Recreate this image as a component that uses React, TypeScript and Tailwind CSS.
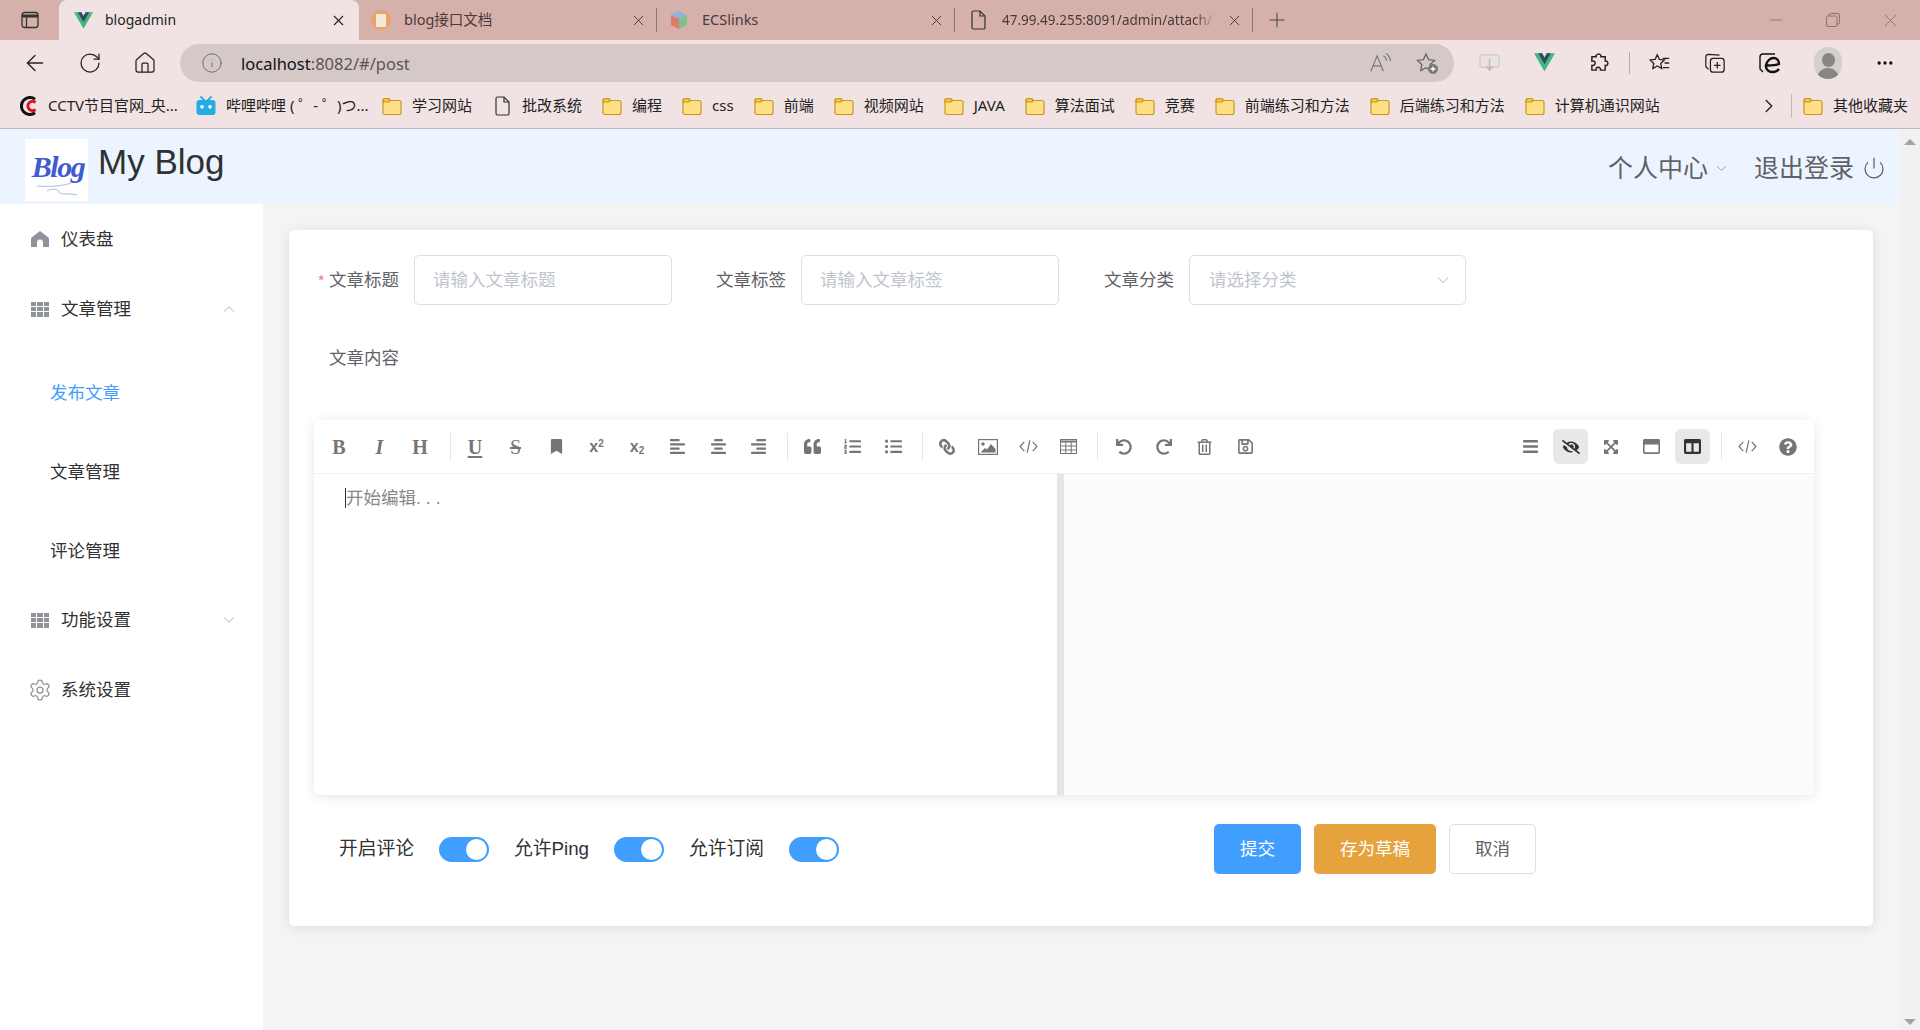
import type { ReactNode } from "react";
import {
  ArrowLeft,
  ChevronDown,
  ChevronRight,
  ChevronUp,
  Home,
  Info,
  Minus,
  MoreHorizontal,
  Plus,
  Power,
  RotateCw,
  Settings,
  X,
} from "lucide-react";
import {
  FaAlignCenter,
  FaAlignLeft,
  FaAlignRight,
  FaBars,
  FaBookmark,
  FaColumns,
  FaExpandArrowsAlt,
  FaEyeSlash,
  FaLink,
  FaListOl,
  FaListUl,
  FaQuestionCircle,
  FaQuoteLeft,
  FaRedo,
  FaRegSave,
  FaRegTrashAlt,
  FaRegWindowMaximize,
  FaUndo,
} from "react-icons/fa";

const pageFont = "[font-family:'Liberation_Sans','Noto_Sans_CJK_SC',sans-serif]";
const chromeFont = "[font-family:'Noto_Sans','Noto_Sans_CJK_SC',sans-serif]";

function VueLogo({ className }: { className: string }) {
  return (
    <svg viewBox="0 0 24 21" className={className}>
      <path fill="#41b883" d="M14.8 0 12 4.8 9.2 0H0l12 20.8L24 0z" />
      <path fill="#35495e" d="M14.8 0 12 4.8 9.2 0H4.8L12 12.5 19.2 0z" />
    </svg>
  );
}

function FileIcon({ className }: { className: string }) {
  return (
    <svg viewBox="0 0 15 20" fill="none" stroke="#333" strokeWidth="1.2" className={className}>
      <path d="M1 2.5A1.5 1.5 0 0 1 2.5 1H9l5 5v11.5a1.5 1.5 0 0 1-1.5 1.5h-10A1.5 1.5 0 0 1 1 17.5z" />
      <path d="M9 1v5h5" />
    </svg>
  );
}

function Folder() {
  return (
    <svg viewBox="0 0 20 20" className="w-5 h-5 shrink-0">
      <path
        d="M1 4.5A2 2 0 0 1 3 2.5h3.5l2 2H17a2 2 0 0 1 2 2v10a2 2 0 0 1-2 2H3a2 2 0 0 1-2-2z"
        fill="#ffdf85"
        stroke="#c8981e"
        strokeWidth="1.2"
      />
      <path d="M1 6V4.5a2 2 0 0 1 2-2h3.5l2 2-1.5 1.5z" fill="#f4c542" stroke="#c8981e" strokeWidth="1.2" />
    </svg>
  );
}

function CctvIcon() {
  return (
    <svg viewBox="0 0 18 20" className="w-[18px] h-5 shrink-0">
      <path d="M15 3.2A8.5 8.5 0 1 0 15 16.8" fill="none" stroke="#111" strokeWidth="3" />
      <path d="M15.5 6.5A4.6 4.6 0 1 0 15.5 13.5" fill="none" stroke="#d8141c" strokeWidth="3" />
    </svg>
  );
}

function BiliIcon() {
  return (
    <svg viewBox="0 0 20 20" className="w-5 h-5 shrink-0">
      <path d="M5 1l3 3M15 1l-3 3" stroke="#23ade5" strokeWidth="1.8" strokeLinecap="round" />
      <rect x="0.5" y="4" width="19" height="15" rx="3" fill="#23ade5" />
      <rect x="4.5" y="9" width="3" height="3.4" rx="1.2" fill="#fff" />
      <rect x="12.5" y="9" width="3" height="3.4" rx="1.2" fill="#fff" />
    </svg>
  );
}

function CubeIcon() {
  return (
    <svg viewBox="0 0 20 20" className="w-5 h-5 shrink-0">
      <path d="M10 1l8 4-8 4-8-4z" fill="#8fb4dc" />
      <path d="M2 5l8 4v10l-8-4z" fill="#e07a6e" />
      <path d="M18 5l-8 4v10l8-4z" fill="#7cc08a" />
    </svg>
  );
}

function DocBadge() {
  return (
    <span className="w-5 h-5 rounded-full bg-[#e8a468] flex items-center justify-center shrink-0">
      <span className="w-[10px] h-[13px] bg-[#f2ead8] rounded-[1px]" />
    </span>
  );
}

function BrowserTab({ icon, title, fade }: { icon: ReactNode; title: string; fade?: boolean }) {
  return (
    <div className="w-[298px] h-full flex items-center pl-3 shrink-0 relative">
      {icon}
      <span
        className={`ml-[13px] flex-1 min-w-0 overflow-hidden whitespace-nowrap text-[#4a3a3a] ${
          fade ? "text-[13.5px] pl-[3px] [mask-image:linear-gradient(to_right,black_90%,transparent)]" : "text-[14.5px]"
        }`}
      >
        {title}
      </span>
      <X className="w-[17px] h-[17px] mx-[9px] text-[#333] shrink-0" strokeWidth={1.25} />
      <span className="w-px h-6 bg-[#8c7472] shrink-0" />
    </div>
  );
}

function RestoreIcon() {
  return (
    <svg viewBox="0 0 14 14" className="w-[14px] h-[14px]" fill="none" stroke="currentColor" strokeWidth="1">
      <rect x="0.5" y="3" width="10.500" height="10.500" rx="1.500" />
      <path d="M3 3V2a1.500 1.500 0 0 1 1.500-1.500H12A1.500 1.500 0 0 1 13.500 2v7.500A1.500 1.500 0 0 1 12 11h-1" />
    </svg>
  );
}

function TabBar() {
  return (
    <div className={`h-10 bg-[#d6b1ab] flex items-end ${chromeFont}`}>
      <div className="w-[59px] h-full flex items-center justify-center">
        <svg viewBox="0 0 18 18" className="w-[18px] h-[18px]" fill="none" stroke="#333" strokeWidth="1.3">
          <rect x="1" y="1.5" width="16" height="15" rx="2.5" />
          <path d="M1 5h16" strokeWidth="3" />
          <path d="M5.5 5v11" />
        </svg>
      </div>
      <div className="w-[300px] h-full bg-[#f1e3e3] rounded-t-lg flex items-center pl-[15px] pr-[12px] shrink-0">
        <VueLogo className="w-[19px] h-[17px]" />
        <span className="ml-3 -mt-px flex-1 text-[14px] text-[#222]">blogadmin</span>
        <X className="w-[17px] h-[17px] text-[#222]" strokeWidth={1.5} />
      </div>
      <BrowserTab icon={<DocBadge />} title="blog接口文档" />
      <BrowserTab icon={<CubeIcon />} title="ECSlinks" />
      <BrowserTab icon={<FileIcon className="w-[15px] h-5 shrink-0 ml-[4px]" />} title="47.99.49.255:8091/admin/attach/" fade />
      <div className="h-full flex items-center ml-[12px]">
        <Plus className="w-[24px] h-[24px] text-[#444]" strokeWidth={1} />
      </div>
      <div className="ml-auto h-full flex items-center pr-[19px] text-[#8a7270]">
        <Minus className="w-[20px] h-[20px]" strokeWidth={1} />
        <span className="ml-[40px]"><RestoreIcon /></span>
        <X className="w-[21px] h-[21px] ml-[40px]" strokeWidth={1} />
      </div>
    </div>
  );
}

function NavBar() {
  return (
    <div className={`h-[45px] bg-[#f1e3e3] flex items-center pl-[22px] ${chromeFont}`}>
      <div className="flex items-center gap-[29px] text-[#222]">
        <ArrowLeft className="w-[26px] h-[26px]" strokeWidth={1.25} />
        <RotateCw className="w-[26px] h-[24px]" strokeWidth={1.25} />
        <Home className="w-[26px] h-[24px]" strokeWidth={1.25} />
      </div>
      <div className="ml-[22px] w-[1274px] h-[38px] mt-[1px] rounded-full bg-[#d5c9c8] flex items-center pl-[21px] pr-[15px]">
        <Info className="w-[22px] h-[22px] text-[#666]" strokeWidth={1} />
        <span className="ml-[18px] mt-[2px] text-[16.5px] text-[#111]">
          localhost<span className="text-[#5c5454]">:8082/#/post</span>
        </span>
        <div className="ml-auto flex items-center gap-[23px] text-[#777]">
          <svg viewBox="0 0 24 24" className="w-[23px] h-[23px]" fill="none" stroke="#777" strokeWidth="1.2">
            <path d="M2 20 8.500 4 15 20M4.500 14.500h8M15 4c2 1 3 3 3.500 5M18 1.500c3 2 4 5 4.500 8" />
          </svg>
          <svg viewBox="0 0 24 24" className="w-[24px] h-[24px]" fill="none" stroke="#666" strokeWidth="1.3">
            <path d="M11 3l2.600 5.600 6 .8-4.400 4.200 1 6-5.200-2.900-5.200 2.900 1-6L2.400 9.400l6-.8z" />
            <circle cx="18" cy="18" r="5" fill="#777" stroke="none" />
            <path d="M18 15.500v5M15.500 18h5" stroke="#fff" />
          </svg>
        </div>
      </div>
      <div className="ml-[23px] flex items-center text-[#222]">
        <span className="w-6 flex justify-center">
          <svg viewBox="0 0 22 22" className="w-[21px] h-[21px]">
            <rect x="1" y="3" width="20" height="13" rx="2" fill="#e8e2e2" stroke="#c8c0c0" />
            <path d="M11 7v11M7.500 15l3.500 4 3.500-4" stroke="#bbb" strokeWidth="1.5" fill="none" />
          </svg>
        </span>
        <span className="w-6 flex justify-center ml-[31px]">
          <VueLogo className="w-[21px] h-[19px]" />
        </span>
        <span className="w-6 flex justify-center ml-[31px]">
          <svg viewBox="0 0 22 22" className="w-[21px] h-[21px]" fill="none" stroke="#222" strokeWidth="1.5">
            <path d="M9 2.500c2-1 4 .5 3.500 2.500H17v4.500c2-.5 3.500 1.500 2.500 3.500-.5 1-1.500 1.500-2.500 1V19h-5c.5-2-1-3-2.500-3S7 17 7.500 19H3v-5c2 .5 3.500-1 3.500-2.500S5 9 3 9.500V5h4.500C7 4 7.500 3 9 2.500z" />
          </svg>
        </span>
        <span className="w-px h-[22px] bg-[#b9a9a9] ml-[18px]" />
        <span className="w-6 flex justify-center ml-[18px]">
          <svg viewBox="0 0 24 24" className="w-[22px] h-[22px]" fill="none" stroke="#222" strokeWidth="1.4">
            <path d="M9 3l2.300 5 5.500.7-4 3.800 1 5.500L9 15.300 4.200 18l1-5.500-4-3.800L6.700 8z" />
            <path d="M15 7h7M17 12h5M15 17h7" />
          </svg>
        </span>
        <span className="w-6 flex justify-center ml-[31px]">
          <svg viewBox="0 0 24 24" className="w-[22px] h-[22px]" fill="none" stroke="#222" strokeWidth="1.4">
            <rect x="7" y="7" width="15" height="15" rx="3" />
            <path d="M17 3.500 5 2.500a3 3 0 0 0-3 3V16l3 3M14.500 11v7M11 14.500h7" />
          </svg>
        </span>
        <span className="w-6 flex justify-center ml-[31px]">
          <svg viewBox="0 0 24 24" className="w-[24px] h-[24px]" fill="none" stroke="#111" strokeWidth="1.4">
            <path d="M17 3H5a3 3 0 0 0-3 3v12l3 3" />
            <path d="M8 14.500c3 0 10 0 13-1.500 0-4-2.500-6-5.500-6S9 9.500 8 14.500zm0 0c-.5 4 3 7 7 6.500 2.500 0 4.500-1 6-3" strokeWidth="2.400" />
          </svg>
        </span>
        <span className="w-[28px] h-[32px] rounded-full bg-[#d3cfcc] ml-[32px] flex flex-col items-center justify-end overflow-hidden">
          <span className="w-[13px] h-[14px] rounded-full bg-[#8a8583]" />
          <span className="w-[22px] h-[11px] mt-[1px] rounded-t-full bg-[#8a8583]" />
        </span>
        <MoreHorizontal className="w-[20px] h-[20px] text-[#111] ml-[33px]" strokeWidth={2} />
      </div>
    </div>
  );
}

const foldersAfter = ["编程", "css", "前端", "视频网站", "JAVA", "算法面试", "竞赛", "前端练习和方法", "后端练习和方法", "计算机通识网站"];

function Bookmark({ icon, label }: { icon: ReactNode; label: string }) {
  return (
    <div className="flex items-center gap-[10px] shrink-0">
      {icon}
      <span className="text-[15px] leading-none text-[#222] whitespace-nowrap">{label}</span>
    </div>
  );
}

function BookmarkBar() {
  return (
    <div className={`h-[44px] bg-[#f1e3e3] border-b border-[#c4b6b6] flex items-center pl-[20px] pr-[12px] pb-[2px] ${chromeFont}`}>
      <div className="flex items-center gap-[20px]">
        <div className="w-[156px]">
          <Bookmark icon={<CctvIcon />} label="CCTV节目官网_央..." />
        </div>
        <div className="w-[166px]">
          <Bookmark icon={<BiliIcon />} label="哔哩哔哩 ( ゜- ゜)つ..." />
        </div>
        <Bookmark icon={<Folder />} label="学习网站" />
        <Bookmark icon={<FileIcon className="w-[15px] h-5 shrink-0 ml-[3px] mr-[2px]" />} label="批改系统" />
        {foldersAfter.map((f) => (
          <Bookmark key={f} icon={<Folder />} label={f} />
        ))}
      </div>
      <div className="ml-auto flex items-center">
        <ChevronRight className="w-[22px] h-[22px] text-[#222]" strokeWidth={1.5} />
        <span className="w-px h-[24px] bg-[#c4b6b6] ml-[11px] mr-[11px]" />
        <Bookmark icon={<Folder />} label="其他收藏夹" />
      </div>
    </div>
  );
}

function GridIcon() {
  return (
    <span className="w-[18px] h-[15px] grid grid-cols-3 grid-rows-3 gap-px shrink-0">
      {Array.from({ length: 9 }).map((_, i) => (
        <span key={i} className="bg-[#909399]" />
      ))}
    </span>
  );
}

function HouseIcon() {
  return (
    <svg viewBox="0 0 18 16" className="w-[18px] h-[16px]">
      <path d="M9 0 18 7v9h-6v-4.500a3 3 0 0 0-6 0V16H0V7z" fill="#909399" />
    </svg>
  );
}

function SideRow({ icon, label, chevron }: { icon: ReactNode; label: string; chevron?: "up" | "down" }) {
  return (
    <div className="h-[70px] flex items-center pl-[31px] pr-[25px]">
      <span className="w-[18px] flex justify-center">{icon}</span>
      <span className="ml-[12px] flex-1 text-[17.5px] text-[#303133]">{label}</span>
      {chevron === "up" && <ChevronUp className="w-[18px] h-[18px] text-[#909399]" strokeWidth={1} />}
      {chevron === "down" && <ChevronDown className="w-[18px] h-[18px] text-[#909399]" strokeWidth={1} />}
    </div>
  );
}

function SubRow({ label, active }: { label: string; active?: boolean }) {
  return (
    <div className={`h-[70px] flex items-center pl-[50px] text-[17.5px] ${active ? "text-[#409eff]" : "text-[#303133]"}`}>
      {label}
    </div>
  );
}

function Sidebar() {
  return (
    <aside className="w-[263px] bg-white shrink-0">
      <SideRow icon={<HouseIcon />} label="仪表盘" />
      <SideRow icon={<GridIcon />} label="文章管理" chevron="up" />
      <div className="h-[241px] pt-[15px] flex flex-col gap-[10px]">
        <SubRow label="发布文章" active />
        <SubRow label="文章管理" />
        <SubRow label="评论管理" />
      </div>
      <SideRow icon={<GridIcon />} label="功能设置" chevron="down" />
      <SideRow icon={<Settings className="w-[24px] h-[24px] text-[#909399] shrink-0" strokeWidth={1.25} />} label="系统设置" />
    </aside>
  );
}

function BlogLogo() {
  return (
    <div className="w-[63px] h-[62px] bg-white flex flex-col items-center shrink-0">
      <span className="mt-[12px] pl-[3px] [font-family:'Liberation_Serif',serif] italic font-bold text-[30px] leading-[32px] tracking-[-1.5px] text-[#3f5bd0]">
        Blog
      </span>
      <svg viewBox="0 0 50 14" className="w-[50px] h-[14px] ml-[6px]" fill="none" stroke="#9aa8d8" strokeWidth="0.8">
        <path d="M2 3c14 1 26 0 34-3M12 8c4-3 12-2 12 1s10 1 18 3" />
      </svg>
    </div>
  );
}

function Header() {
  return (
    <header className="h-[75px] bg-[#ecf5ff] flex pl-[25px] pr-[13px] items-start shrink-0">
      <div className="mt-[10px]">
        <BlogLogo />
      </div>
      <span className="ml-[10px] mt-[12px] text-[35px] leading-[42px] text-[#303133]">My Blog</span>
      <div className="ml-auto flex items-center mt-[25px] text-[25px] leading-[28px] text-[#606266]">
        <span>个人中心</span>
        <ChevronDown className="w-[17px] h-[17px] text-[#909399] ml-[5px]" strokeWidth={1.25} />
        <span className="ml-[24px]">退出登录</span>
        <Power className="w-[24px] h-[24px] ml-[8px]" strokeWidth={1.25} />
      </div>
    </header>
  );
}

function FieldLabel({ text, required }: { text: string; required?: boolean }) {
  return (
    <label className="w-[110px] h-[50px] flex items-center justify-end pr-[15px] text-[17.5px] text-[#606266] shrink-0">
      {required && <span className="text-[#f56c6c] mr-[5px] text-[15px]">*</span>}
      {text}
    </label>
  );
}

function TextBox({ placeholder }: { placeholder: string }) {
  return (
    <input
      readOnly
      placeholder={placeholder}
      className="w-[258px] h-[50px] border border-[#dcdfe6] rounded-[5px] px-[18px] text-[17.5px] outline-none placeholder:text-[#c0c4cc] bg-white"
    />
  );
}

function Tool({ children, active }: { children: ReactNode; active?: boolean }) {
  return (
    <span
      className={`w-[35px] h-[35px] rounded-[6px] flex items-center justify-center shrink-0 text-[#757575] ${
        active ? "bg-[#e8e8e8]" : ""
      }`}
    >
      {children}
    </span>
  );
}

function TextTool({ children, className }: { children: ReactNode; className?: string }) {
  return (
    <Tool>
      <span className={`[font-family:'Liberation_Serif',serif] font-bold text-[20px] leading-none ${className ?? ""}`}>{children}</span>
    </Tool>
  );
}

function ToolSep({ left, right }: { left: number; right: number }) {
  return <span className="w-px h-[27px] bg-[#e6e6e6] shrink-0" style={{ marginLeft: left, marginRight: right }} />;
}

function CodeGlyph() {
  return (
    <svg viewBox="0 0 20 16" className="w-[19px] h-[15px]" fill="none" stroke="#757575" strokeWidth="1.3">
      <path d="M5.500 3 1 8l4.500 5M14.500 3 19 8l-4.500 5M11.500 1.500l-3 13" />
    </svg>
  );
}

function ImageGlyph() {
  return (
    <svg viewBox="0 0 20 16" className="w-[20px] h-[16px]">
      <rect x="0.6" y="0.6" width="18.800" height="14.800" fill="none" stroke="#757575" strokeWidth="1.200" />
      <circle cx="5" cy="5" r="1.700" fill="#757575" />
      <path d="M2.500 13.500 7 9l2 1.500L13 5l4.500 5v3.500z" fill="#757575" />
    </svg>
  );
}

function TableGlyph() {
  return (
    <svg viewBox="0 0 17 15" className="w-[17px] h-[15px]" fill="none" stroke="#757575" strokeWidth="1">
      <rect x="0.5" y="0.5" width="16" height="14" />
      <path d="M0.500 2.500h16" strokeWidth="2" />
      <path d="M0.500 7h16M0.500 11h16M5.800 2v13M11.200 2v13" />
    </svg>
  );
}

function Toolbar() {
  const icon = "w-[17px] h-[17px]";
  return (
    <div className="h-[54px] flex items-center pl-[7.5px] pr-[8.5px] gap-[5.5px] border-b border-[#f0f0f8] shrink-0">
      <TextTool>B</TextTool>
      <TextTool className="italic">I</TextTool>
      <TextTool>H</TextTool>
      <ToolSep left={7} right={1} />
      <TextTool className="underline underline-offset-2">U</TextTool>
      <TextTool className="line-through font-normal">S</TextTool>
      <Tool><FaBookmark className="w-[13px] h-[15px]" /></Tool>
      <Tool>
        <span className="[font-family:'Liberation_Sans',sans-serif] font-bold text-[16px] leading-none">
          x<sup className="text-[10px]">2</sup>
        </span>
      </Tool>
      <Tool>
        <span className="[font-family:'Liberation_Sans',sans-serif] font-bold text-[16px] leading-none">
          x<sub className="text-[10px]">2</sub>
        </span>
      </Tool>
      <Tool><FaAlignLeft className={icon} /></Tool>
      <Tool><FaAlignCenter className={icon} /></Tool>
      <Tool><FaAlignRight className={icon} /></Tool>
      <ToolSep left={5.5} right={1} />
      <Tool><FaQuoteLeft className={icon} /></Tool>
      <Tool><FaListOl className={icon} /></Tool>
      <Tool><FaListUl className={icon} /></Tool>
      <ToolSep left={6} right={1} />
      <Tool><FaLink className="w-[16px] h-[16px] -scale-x-100" /></Tool>
      <Tool><ImageGlyph /></Tool>
      <Tool><CodeGlyph /></Tool>
      <Tool><TableGlyph /></Tool>
      <ToolSep left={5.5} right={2.5} />
      <Tool><FaUndo className="w-[16px] h-[16px]" /></Tool>
      <Tool><FaRedo className="w-[16px] h-[16px]" /></Tool>
      <Tool><FaRegTrashAlt className="w-[15px] h-[16px]" /></Tool>
      <Tool><FaRegSave className="w-[17px] h-[17px]" /></Tool>
      <span className="ml-auto" />
      <Tool><FaBars className={icon} /></Tool>
      <Tool active><FaEyeSlash className="w-[18px] h-[16px] text-[#333]" /></Tool>
      <Tool><FaExpandArrowsAlt className="w-[16px] h-[16px]" /></Tool>
      <Tool><FaRegWindowMaximize className={icon} /></Tool>
      <Tool active><FaColumns className="w-[17px] h-[17px] text-[#333]" /></Tool>
      <ToolSep left={6} right={2.5} />
      <Tool><CodeGlyph /></Tool>
      <Tool><FaQuestionCircle className="w-[18px] h-[18px]" /></Tool>
    </div>
  );
}

function Editor() {
  return (
    <div className="ml-[10px] w-[1500px] h-[375px] mt-[38px] rounded-[5px] bg-white shadow-[0_2px_12px_0_rgba(0,0,0,0.1)] flex flex-col overflow-hidden">
      <Toolbar />
      <div className="flex-1 flex min-h-0">
        <div className="w-[743px] pl-[31px] pt-[13px] text-[17.5px] leading-[22px] text-[#888]">
          <span className="border-l border-[#333]">开始编辑<span className="tracking-[5px]">...</span></span>
        </div>
        <div className="w-[7px] bg-[#e5e5e5]" />
        <div className="flex-1 bg-[#fbfbfb]" />
      </div>
    </div>
  );
}

function Toggle() {
  return (
    <span className="w-[50px] h-[25px] rounded-full bg-[#409eff] flex items-center justify-end pr-[2px] shrink-0">
      <span className="w-[21px] h-[21px] rounded-full bg-white" />
    </span>
  );
}

function BottomBar() {
  return (
    <div className="ml-[10px] mt-[29px] flex items-center text-[18.750px] text-[#303133] whitespace-nowrap">
      <span className="ml-[25px] w-[75px]">开启评论</span>
      <span className="ml-[25px]"><Toggle /></span>
      <span className="ml-[25px] w-[75px]">允许Ping</span>
      <span className="ml-[25px]"><Toggle /></span>
      <span className="ml-[25px] w-[75px]">允许订阅</span>
      <span className="ml-[25px]"><Toggle /></span>
      <button className="ml-[375px] w-[87px] h-[50px] rounded-[5px] bg-[#409eff] text-white text-[17.5px]">提交</button>
      <button className="ml-[13px] w-[122px] h-[50px] rounded-[5px] bg-[#e6a23c] text-white text-[17.5px]">存为草稿</button>
      <button className="ml-[13px] w-[87px] h-[50px] rounded-[5px] border border-[#dcdfe6] bg-white text-[#606266] text-[17.5px]">取消</button>
    </div>
  );
}

function ArticleCard() {
  return (
    <section className="h-[696px] bg-white rounded-[5px] shadow-[0_2px_12px_0_rgba(0,0,0,0.1)] pl-[15px] pt-[25px]">
      <div className="flex items-center">
        <FieldLabel text="文章标题" required />
        <TextBox placeholder="请输入文章标题" />
        <div className="ml-[19px]"><FieldLabel text="文章标签" /></div>
        <div className="w-[257px]"><TextBox placeholder="请输入文章标签" /></div>
        <div className="ml-[21px]"><FieldLabel text="文章分类" /></div>
        <div className="w-[277px] h-[50px] border border-[#dcdfe6] rounded-[5px] pl-[19px] pr-[12px] flex items-center justify-between text-[17.5px] text-[#c0c4cc]">
          请选择分类
          <ChevronDown className="w-[20px] h-[20px]" strokeWidth={1.25} />
        </div>
      </div>
      <div className="mt-[28px]">
        <FieldLabel text="文章内容" />
      </div>
      <div className="-mt-[1px]">
        <Editor />
      </div>
      <BottomBar />
    </section>
  );
}

function PageScrollbar() {
  return (
    <div className="w-[21px] bg-[#f1f1f1] shrink-0 flex flex-col items-center justify-between py-[5px]">
      <span className="w-0 h-0 border-x-[6px] border-x-transparent border-b-[6px] border-b-[#a3a3a3] mt-[5px]" />
      <span className="w-0 h-0 border-x-[6px] border-x-transparent border-t-[6px] border-t-[#a3a3a3]" />
    </div>
  );
}

export default function App() {
  return (
    <div className={`w-[1920px] h-[1030px] flex flex-col overflow-hidden ${pageFont}`}>
      <TabBar />
      <NavBar />
      <BookmarkBar />
      <div className="flex-1 flex min-h-0">
        <div className="flex-1 flex flex-col min-w-0">
          <Header />
          <div className="flex-1 flex min-h-0 bg-[#f4f4f4]">
            <Sidebar />
            <main className="flex-1 p-[26px] min-w-0">
              <ArticleCard />
            </main>
          </div>
        </div>
        <PageScrollbar />
      </div>
    </div>
  );
}
